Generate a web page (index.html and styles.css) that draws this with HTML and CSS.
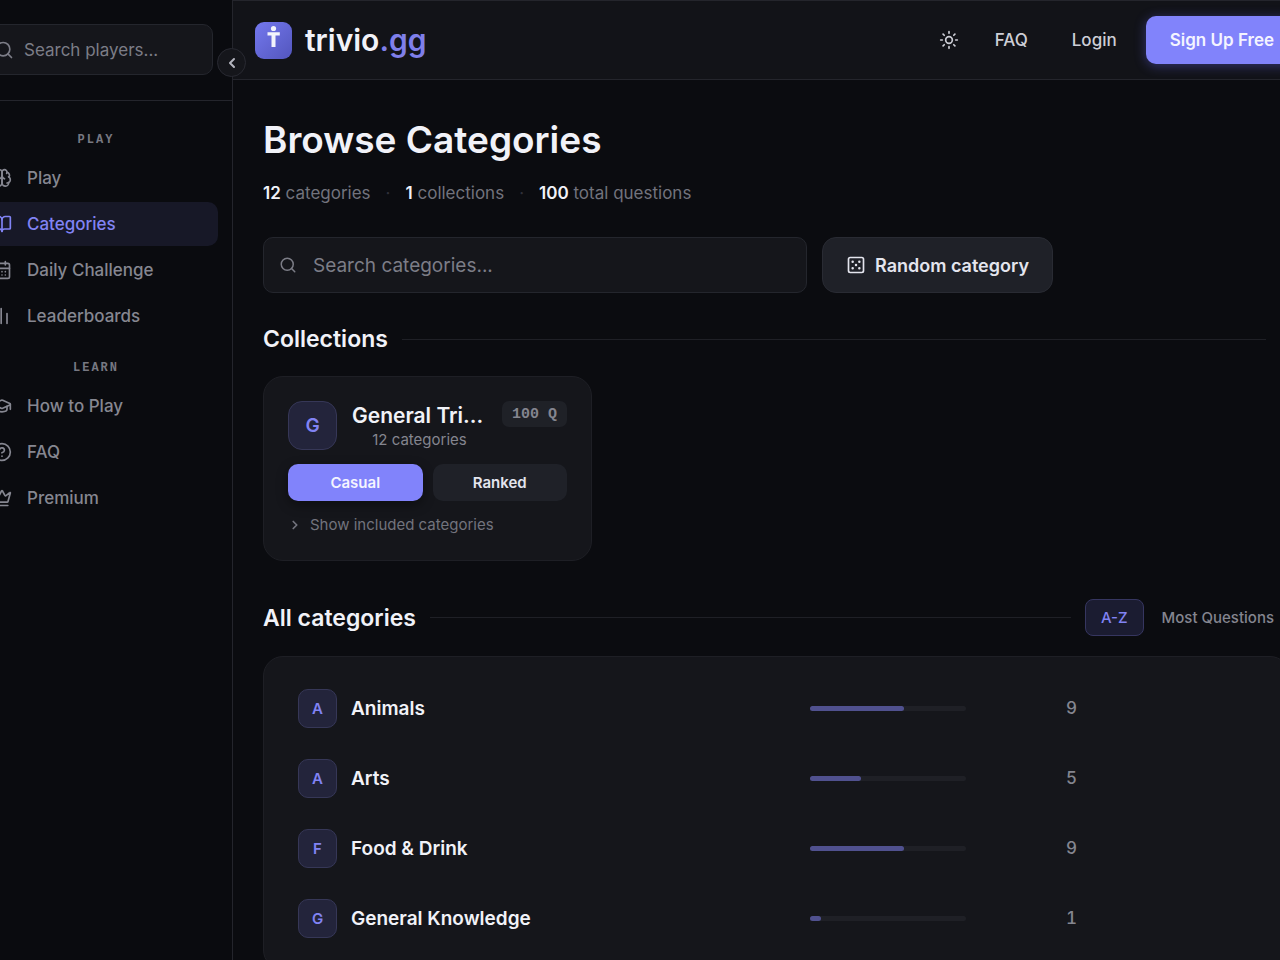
FILE: index.html
```html
<!DOCTYPE html>
<html lang="en">
<head>
<meta charset="utf-8">
<title>Browse Categories - trivio.gg</title>
<link rel="stylesheet" href="styles.css">
</head>

<body>

<div class="app">

  <aside class="sidebar">
    <div class="sidebar-search">
      <label class="player-search">
        <svg class="icon" viewBox="0 0 24 24"><circle cx="11" cy="11" r="8"/><path d="M21 21l-4.3-4.3"/></svg>
        <input type="text" placeholder="Search players..." aria-label="Search players">
      </label>
    </div>

    <button class="sidebar-toggle" type="button" aria-label="Collapse sidebar">
      <svg class="icon" viewBox="0 0 24 24"><path d="M15 18l-6-6 6-6"/></svg>
    </button>

    <nav class="sidebar-nav">
      <h2 class="nav-label">Play</h2>
      <a class="nav-item" href="#">
        <svg class="icon" viewBox="0 0 24 24"><path d="M12 5a3 3 0 1 0-6 .1 4 4 0 0 0-2.5 5.8 4 4 0 0 0 .5 6.6A4 4 0 1 0 12 18z"/><path d="M12 5a3 3 0 1 1 6 .1 4 4 0 0 1 2.5 5.8 4 4 0 0 1-.5 6.6A4 4 0 1 1 12 18z"/><path d="M15 13a4.5 4.5 0 0 1-3-4 4.5 4.5 0 0 1-3 4"/><path d="M17.6 6.5A3 3 0 0 0 18 5.1M20.5 10.9a4 4 0 0 0-.6-.4M18 18a4 4 0 0 0 2-.5"/></svg>
        Play
      </a>
      <a class="nav-item active" href="#">
        <svg class="icon" viewBox="0 0 24 24"><path d="M12 7v14"/><path d="M3 18a1 1 0 0 1-1-1V4a1 1 0 0 1 1-1h5a4 4 0 0 1 4 4 4 4 0 0 1 4-4h5a1 1 0 0 1 1 1v13a1 1 0 0 1-1 1h-6a3 3 0 0 0-3 3 3 3 0 0 0-3-3z"/></svg>
        Categories
      </a>
      <a class="nav-item" href="#">
        <svg class="icon" viewBox="0 0 24 24"><path d="M8 2v4M16 2v4M3 10h18"/><rect x="3" y="4" width="18" height="18" rx="2"/><path d="M8 14h.01M12 14h.01M16 14h.01M8 18h.01M12 18h.01M16 18h.01"/></svg>
        Daily Challenge
      </a>
      <a class="nav-item" href="#">
        <svg class="icon" viewBox="0 0 24 24"><path d="M4 21v-6M11 21V3M18 21V9"/></svg>
        Leaderboards
      </a>

      <h2 class="nav-label">Learn</h2>
      <a class="nav-item" href="#">
        <svg class="icon" viewBox="0 0 24 24"><path d="M21.4 10.9a1 1 0 0 0 0-1.8l-8.6-3.9a2 2 0 0 0-1.6 0L2.6 9.1a1 1 0 0 0 0 1.8l8.6 3.9a2 2 0 0 0 1.6 0z"/><path d="M22 10v6M6 12.5V16a6 3 0 0 0 12 0v-3.5"/></svg>
        How to Play
      </a>
      <a class="nav-item" href="#">
        <svg class="icon" viewBox="0 0 24 24"><circle cx="12" cy="12" r="10"/><path d="M9.1 9a3 3 0 0 1 5.8 1c0 2-3 3-3 3M12 17h.01"/></svg>
        FAQ
      </a>
      <a class="nav-item" href="#">
        <svg class="icon" viewBox="0 0 24 24"><path d="M11.6 3.3a.5.5 0 0 1 .8 0L15.4 8.900a1 1 0 0 0 1.500.3l4.300-3.700a.5.5 0 0 1 .8.5l-2.800 10.200a1 1 0 0 1-1 .7H5.800a1 1 0 0 1-1-.7L2 6a.5.5 0 0 1 .8-.5l4.300 3.700a1 1 0 0 0 1.500-.3zM5 21h14"/></svg>
        Premium
      </a>
    </nav>
  </aside>

  <div class="page">

    <header class="topbar">
      <a class="brand" href="#">
        <svg class="brand-mark" viewBox="0 0 37 37">
          <defs>
            <linearGradient id="mark" x1="0" y1="0" x2="1" y2="1">
              <stop offset="0" stop-color="#7478ee"/>
              <stop offset="1" stop-color="#5356bd"/>
            </linearGradient>
          </defs>
          <rect width="37" height="37" rx="9" fill="url(#mark)"/>
          <circle cx="18.5" cy="6.5" r="2.6" fill="#f2f3fb"/>
          <path d="M12.5 10.300h12.300v3.200h-4.300v11.500h-4V13.500h-4z" fill="#f2f3fb"/>
        </svg>
        <span class="brand-name">trivio<span class="brand-tld">.gg</span></span>
      </a>
      <nav class="topbar-nav">
        <button class="theme-toggle" type="button" aria-label="Toggle theme">
          <svg class="icon" viewBox="0 0 24 24"><circle cx="12" cy="12" r="4"/><path d="M12 2v2M12 20v2M4.9 4.9l1.4 1.4M17.7 17.7l1.4 1.4M2 12h2M20 12h2M6.3 17.7l-1.4 1.4M19.1 4.9l-1.4 1.4"/></svg>
        </button>
        <a class="topbar-link" href="#">FAQ</a>
        <a class="topbar-link" href="#">Login</a>
        <a class="signup" href="#">Sign Up Free</a>
      </nav>
    </header>

    <main class="content">
      <h1>Browse Categories</h1>
      <div class="stats">
        <span><b>12</b> categories</span>
        <span class="dot">·</span>
        <span><b>1</b> collections</span>
        <span class="dot">·</span>
        <span><b>100</b> total questions</span>
      </div>

      <div class="search-row">
        <label class="category-search">
          <svg class="icon" viewBox="0 0 24 24"><circle cx="11" cy="11" r="8"/><path d="M21 21l-4.3-4.3"/></svg>
          <input type="text" placeholder="Search categories..." aria-label="Search categories">
        </label>
        <button class="random" type="button">
          <svg class="icon" viewBox="0 0 24 24"><rect x="3" y="3" width="18" height="18" rx="2"/><path class="pips" d="M8 8h.01M16 8h.01M12 12h.01M8 16h.01M16 16h.01"/></svg>
          Random category
        </button>
      </div>

      <div class="section-head collections-head">
        <h2>Collections</h2>
        <span class="rule"></span>
      </div>

      <article class="collection">
        <div class="collection-top">
          <span class="collection-badge">G</span>
          <div class="collection-info">
            <h3>General Tri...</h3>
            <p>12 categories</p>
          </div>
          <span class="question-count">100 Q</span>
        </div>
        <div class="modes">
          <button class="mode primary" type="button">Casual</button>
          <button class="mode" type="button">Ranked</button>
        </div>
        <button class="disclosure" type="button">
          <svg class="icon" viewBox="0 0 24 24"><path d="M9 18l6-6-6-6"/></svg>
          Show included categories
        </button>
      </article>

      <div class="section-head">
        <h2>All categories</h2>
        <span class="rule"></span>
        <div class="sort">
          <button class="sort-option selected" type="button">A-Z</button>
          <button class="sort-option" type="button">Most Questions</button>
        </div>
      </div>

      <div class="category-list">
        <a class="category" href="#">
          <span class="category-badge">A</span>
          <span class="category-name">Animals</span>
          <span class="bar"><span class="bar-fill" style="width: 60%"></span></span>
          <span class="category-count">9</span>
        </a>
        <a class="category" href="#">
          <span class="category-badge">A</span>
          <span class="category-name">Arts</span>
          <span class="bar"><span class="bar-fill" style="width: 33%"></span></span>
          <span class="category-count">5</span>
        </a>
        <a class="category" href="#">
          <span class="category-badge">F</span>
          <span class="category-name">Food &amp; Drink</span>
          <span class="bar"><span class="bar-fill" style="width: 60%"></span></span>
          <span class="category-count">9</span>
        </a>
        <a class="category" href="#">
          <span class="category-badge">G</span>
          <span class="category-name">General Knowledge</span>
          <span class="bar"><span class="bar-fill" style="width: 7%"></span></span>
          <span class="category-count">1</span>
        </a>
      </div>
    </main>

  </div>
</div>

</body>
</html>
```
FILE: styles.css
```css
* {
  box-sizing: border-box;
}

body {
  background-color: #0b0c10;
  color: #f1f2f8;
  font-family: Inter, 'Liberation Sans', sans-serif;
  font-size: 17px;
  margin: 0;
  overflow: hidden;
}

h1,
h2,
h3,
p {
  font-weight: 600;
  margin: 0;
}

a {
  color: inherit;
  text-decoration: none;
}

button,
input {
  background: none;
  border: 0;
  color: inherit;
  font: inherit;
  margin: 0;
  padding: 0;
}

button {
  cursor: pointer;
}

.icon {
  display: block;
  fill: none;
  flex: none;
  height: 20px;
  stroke: currentColor;
  stroke-linecap: round;
  stroke-linejoin: round;
  stroke-width: 2;
  width: 20px;
}

/* The shell is wider than the window and bleeds off both sides */
.app {
  display: flex;
  margin: 0 -40px 0 -41px;
  min-height: 100vh;
}


/* Sidebar */
.sidebar {
  background-color: #0a0b0f;
  border-right: 1px solid #24252c;
  flex: none;
  position: relative;
  width: 274px;
}

.sidebar-search {
  border-bottom: 1px solid #24252c;
  padding: 24px 19px 25px 20px;
}

.player-search {
  align-items: center;
  background-color: #15161b;
  border: 1px solid #24262d;
  border-radius: 10px;
  color: #7c7d87;
  display: flex;
  gap: 10px;
  height: 51px;
  padding: 0 14px;
}
.player-search input {
  flex: 1;
  min-width: 0;
  outline: none;
}

input::placeholder {
  color: #7c7d87;
  opacity: 1;
}

.sidebar-toggle {
  align-items: center;
  background-color: #15161b;
  border: 1px solid #292a32;
  border-radius: 50%;
  color: #b4b5bf;
  display: flex;
  height: 29px;
  justify-content: center;
  position: absolute;
  right: -14px;
  top: 48px;
  width: 29px;
}
.sidebar-toggle .icon {
  height: 16px;
  stroke-width: 3;
  width: 16px;
}

.sidebar-nav {
  display: flex;
  flex-direction: column;
  gap: 2px;
  padding: 11px 14px 11px 15px;
}

.nav-label {
  color: #777882;
  font-family: 'Liberation Mono', monospace;
  font-size: 12px;
  font-weight: bold;
  letter-spacing: 2px;
  line-height: 16px;
  margin: 20px 0 6px;
  text-align: center;
  text-transform: uppercase;
}

.nav-item {
  align-items: center;
  border-radius: 10px;
  color: #868791;
  display: flex;
  font-weight: 500;
  gap: 15px;
  height: 44px;
  padding: 0 18px;
}
.nav-item.active {
  background-color: #171827;
  color: #8183f4;
}


/* Top bar */
.page {
  flex: 1;
  min-width: 0;
}

.topbar {
  align-items: center;
  background-color: #121318;
  border-bottom: 1px solid #24252c;
  border-top: 1px solid #24252c;
  display: flex;
  height: 80px;
  justify-content: space-between;
  padding: 0 22px;
}

.brand {
  align-items: center;
  display: flex;
  gap: 13px;
}

.brand-mark {
  height: 37px;
  width: 37px;
}

.brand-name {
  font-size: 30px;
  font-weight: 600;
}

.brand-tld {
  color: #7f7fea;
}

.topbar-nav {
  align-items: center;
  color: #cdced6;
  display: flex;
  font-weight: 500;
}

.theme-toggle {
  margin-right: 14px;
}

.topbar-link {
  padding: 12px 22px;
}

.signup {
  background-color: #8183fb;
  border-radius: 10px;
  box-shadow: 0 2px 12px rgba(99, 102, 241, 0.4);
  color: #f4f4ff;
  font-weight: 600;
  line-height: 24px;
  margin-left: 7px;
  padding: 12px 24px;
}


/* Page heading and search */
.content {
  padding: 36px 30px;
}

h1 {
  font-size: 37px;
  line-height: 48px;
}

.stats {
  color: #72737d;
  display: flex;
  gap: 15px;
  line-height: 24px;
  margin-top: 17px;
}
.stats b {
  color: #f1f2f8;
  font-weight: 600;
}
.stats .dot {
  color: #30313a;
}

.search-row {
  display: flex;
  gap: 15px;
  margin: 32px 0;
}

.category-search {
  align-items: center;
  background-color: #15161b;
  border: 1px solid #24262d;
  border-radius: 10px;
  color: #7c7d87;
  display: flex;
  font-size: 19px;
  gap: 16px;
  height: 56px;
  padding: 0 15px;
  width: 544px;
}
.category-search .icon {
  height: 18px;
  width: 18px;
}
.category-search input {
  flex: 1;
  min-width: 0;
  outline: none;
}

.random {
  align-items: center;
  background-color: #1f2128;
  border: 1px solid #292b33;
  border-radius: 14px;
  color: #e4e5ee;
  display: flex;
  font-size: 18px;
  font-weight: 600;
  gap: 9px;
  padding: 0 23px;
}
.pips {
  stroke-width: 3;
}


/* Section headings */
.section-head {
  align-items: center;
  display: flex;
  gap: 14px;
}
.section-head h2 {
  font-size: 23px;
  line-height: 28px;
}
.collections-head {
  padding-right: 24px;
}

.rule {
  background-color: #1f2026;
  flex: 1;
  height: 1px;
}

.sort {
  display: flex;
  gap: 2px;
}

.sort-option {
  border: 1px solid transparent;
  border-radius: 8px;
  color: #84858f;
  font-size: 15px;
  font-weight: 500;
  height: 37px;
  padding: 0 15px;
}
.sort-option.selected {
  background-color: #1b1c31;
  border-color: #363660;
  color: #8183f4;
}


/* Collection card */
.collection {
  background-color: #15161b;
  border: 1px solid #1e1f25;
  border-radius: 20px;
  margin: 23px 0 38px;
  padding: 24px;
  width: 329px;
}

.collection-top {
  align-items: flex-start;
  display: flex;
  gap: 15px;
}

.collection-badge,
.category-badge {
  align-items: center;
  background-color: #23243b;
  border: 1px solid #363757;
  color: #8183f4;
  display: flex;
  font-weight: 600;
  justify-content: center;
}
.collection-badge {
  border-radius: 14px;
  flex: none;
  font-size: 19px;
  height: 49px;
  width: 49px;
}

.collection-info {
  flex: 1;
  min-width: 0;
  text-align: center;
}
.collection-info h3 {
  font-size: 21px;
  line-height: 29px;
  text-align: left;
  white-space: nowrap;
}
.collection-info p {
  color: #84858f;
  font-size: 15px;
  font-weight: 400;
  line-height: 20px;
}

.question-count {
  background-color: #1f2127;
  border-radius: 7px;
  color: #84858f;
  font-family: 'Liberation Mono', monospace;
  font-size: 15px;
  font-weight: bold;
  line-height: 24px;
  padding: 2px 10px 0;
}

.modes {
  display: flex;
  gap: 10px;
  margin: 14px 0 13px;
}

.mode {
  background-color: #1f2128;
  border-radius: 10px;
  color: #e4e5ee;
  flex: 1;
  font-size: 15px;
  font-weight: 600;
  height: 37px;
}
.mode.primary {
  background-color: #8183fb;
  box-shadow: 0 4px 12px rgba(0, 0, 0, 0.4);
  color: #f4f4ff;
}

.disclosure {
  align-items: center;
  color: #72737d;
  display: flex;
  font-size: 15px;
  gap: 8px;
  line-height: 22px;
}
.disclosure .icon {
  height: 14px;
  stroke-width: 3;
  width: 14px;
}


/* Category list */
.category-list {
  background-color: #15161b;
  border: 1px solid #1e1f25;
  border-radius: 20px;
  margin-top: 20px;
  padding: 16px 10px;
}

.category {
  align-items: center;
  display: grid;
  gap: 14px;
  grid-template-columns: 39px 1fr 156px 97px;
  height: 70px;
  padding: 0 202px 0 24px;
}

.category-badge {
  border-radius: 10px;
  font-size: 15px;
  height: 39px;
}

.category-name {
  font-size: 19px;
  font-weight: 600;
}

.bar {
  background-color: #1f2026;
  border-radius: 3px;
  display: block;
  height: 5px;
}

.bar-fill {
  background-color: #50518f;
  border-radius: 3px;
  display: block;
  height: 5px;
}

.category-count {
  color: #84858f;
  font-variant-numeric: tabular-nums;
  font-weight: 500;
  text-align: right;
}
```
